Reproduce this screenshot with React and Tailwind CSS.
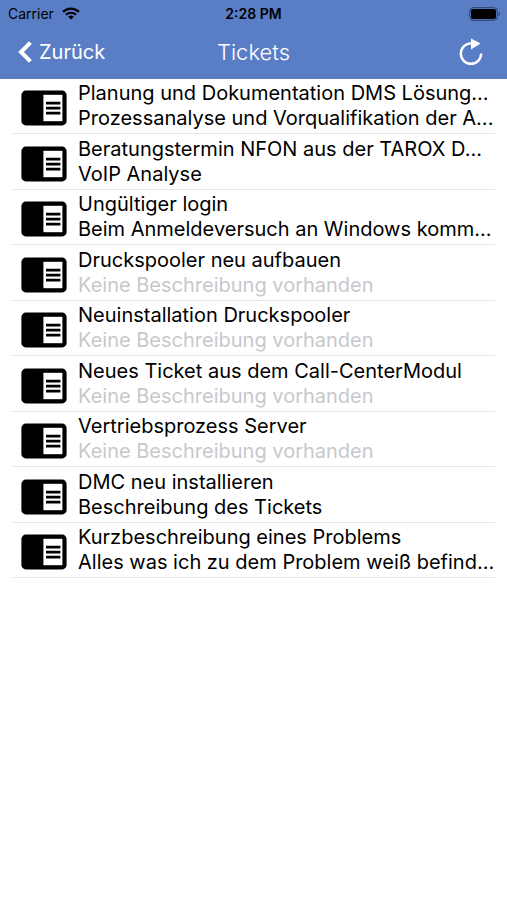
import React from 'react';

const tickets = [
  { id: 1, title: 'Planung und Dokumentation DMS Lösung...', description: 'Prozessanalyse und Vorqualifikation der A...' },
  { id: 2, title: 'Beratungstermin NFON aus der TAROX D...', description: 'VoIP Analyse' },
  { id: 3, title: 'Ungültiger login', description: 'Beim Anmeldeversuch an Windows komm...' },
  { id: 4, title: 'Druckspooler neu aufbauen', description: '' },
  { id: 5, title: 'Neuinstallation Druckspooler', description: '' },
  { id: 6, title: 'Neues Ticket aus dem Call-CenterModul', description: '' },
  { id: 7, title: 'Vertriebsprozess Server', description: '' },
  { id: 8, title: 'DMC neu installieren', description: 'Beschreibung des Tickets' },
  { id: 9, title: 'Kurzbeschreibung eines Problems', description: 'Alles was ich zu dem Problem weiß befind...' },
];

function WifiIcon() {
  return (
    <svg width="18" height="13" viewBox="0 0 18 13" fill="none" stroke="#000" strokeWidth="2.2" aria-hidden="true">
      <path d="M1.1 4.9a11.2 11.2 0 0 1 15.8 0" />
      <path d="M4 7.8a7.1 7.1 0 0 1 10 0" />
      <path d="M9 12.6 6.2 9.8a4 4 0 0 1 5.6 0z" fill="#000" stroke="none" />
    </svg>
  );
}

function BatteryIcon() {
  return (
    <svg width="32" height="14" viewBox="0 0 32 14" aria-hidden="true">
      <rect x="0.7" y="0.7" width="27.6" height="12.6" rx="3.4" fill="none" stroke="#2c3f66" strokeWidth="1" />
      <rect x="2" y="2" width="25" height="10" rx="2" fill="#000" />
      <path d="M29.6 4.8c1.6.6 1.6 3.8 0 4.4z" fill="#2c3f66" />
    </svg>
  );
}

function BackIcon() {
  return (
    <svg width="14" height="22" viewBox="0 0 14 22" fill="none" stroke="#fff" strokeWidth="4" aria-hidden="true">
      <path d="M12.4 1.6 3 11l9.4 9.4" />
    </svg>
  );
}

function ReloadIcon() {
  return (
    <svg width="24" height="28" viewBox="0 0 24 28" aria-hidden="true">
      <path d="M12.5 5.4H12a10.2 10.2 0 1 0 10.2 10.2" fill="none" stroke="#fff" strokeWidth="2.4" />
      <path d="M12 0.6v10.8L21.6 5.6z" fill="#fff" />
    </svg>
  );
}

function TicketIcon() {
  return (
    <svg width="46" height="36" viewBox="0 0 46 36" aria-hidden="true">
      <rect x="0.4" y="0.6" width="45.2" height="34.8" rx="4.4" fill="#000" />
      <path d="M22.4 4.8h19v26.4h-19z" fill="#fff" />
      <path d="M25 11.8h14.4v2.6H25zM25 16.8h14.4v2.6H25zM25 21.8h14.4v2.6H25z" fill="#000" />
    </svg>
  );
}

function App() {
  return (
    <div className="min-h-screen bg-white font-['Inter','Liberation_Sans',sans-serif] text-black">
      <header className="bg-[#5a7ec6] pb-0.5">
        <div className="grid grid-cols-3 items-center h-[27px] px-1.5 text-sm">
          <div className="flex items-center gap-2 pl-0.5">
            <span>Carrier</span>
            <WifiIcon />
          </div>
          <span className="text-center font-semibold">2:28 PM</span>
          <div className="flex justify-end">
            <BatteryIcon />
          </div>
        </div>
        <div className="grid grid-cols-3 items-center h-[50px] px-[18px] text-white">
          <button type="button" className="flex items-center gap-[7px] text-xl">
            <BackIcon />
            Zurück
          </button>
          <h1 className="text-center text-[22px] font-light">Tickets</h1>
          <button type="button" aria-label="Aktualisieren" className="justify-self-end pr-1.5">
            <ReloadIcon />
          </button>
        </div>
      </header>

      <ul className="px-3">
        {tickets.map(ticket => (
          <li key={ticket.id} className="flex items-center gap-[11px] h-[55px] even:h-14 pl-[9px] border-b border-gray-200">
            <div className="shrink-0 pt-1">
              <TicketIcon />
            </div>
            <div className="min-w-0 flex-1 text-xl leading-[25px]">
              <p className="whitespace-nowrap">{ticket.title}</p>
              <p className={`whitespace-nowrap ${ticket.description ? '' : 'text-[#c8c8cc]'}`}>
                {ticket.description || 'Keine Beschreibung vorhanden'}
              </p>
            </div>
          </li>
        ))}
      </ul>
    </div>
  );
}

export default App;
